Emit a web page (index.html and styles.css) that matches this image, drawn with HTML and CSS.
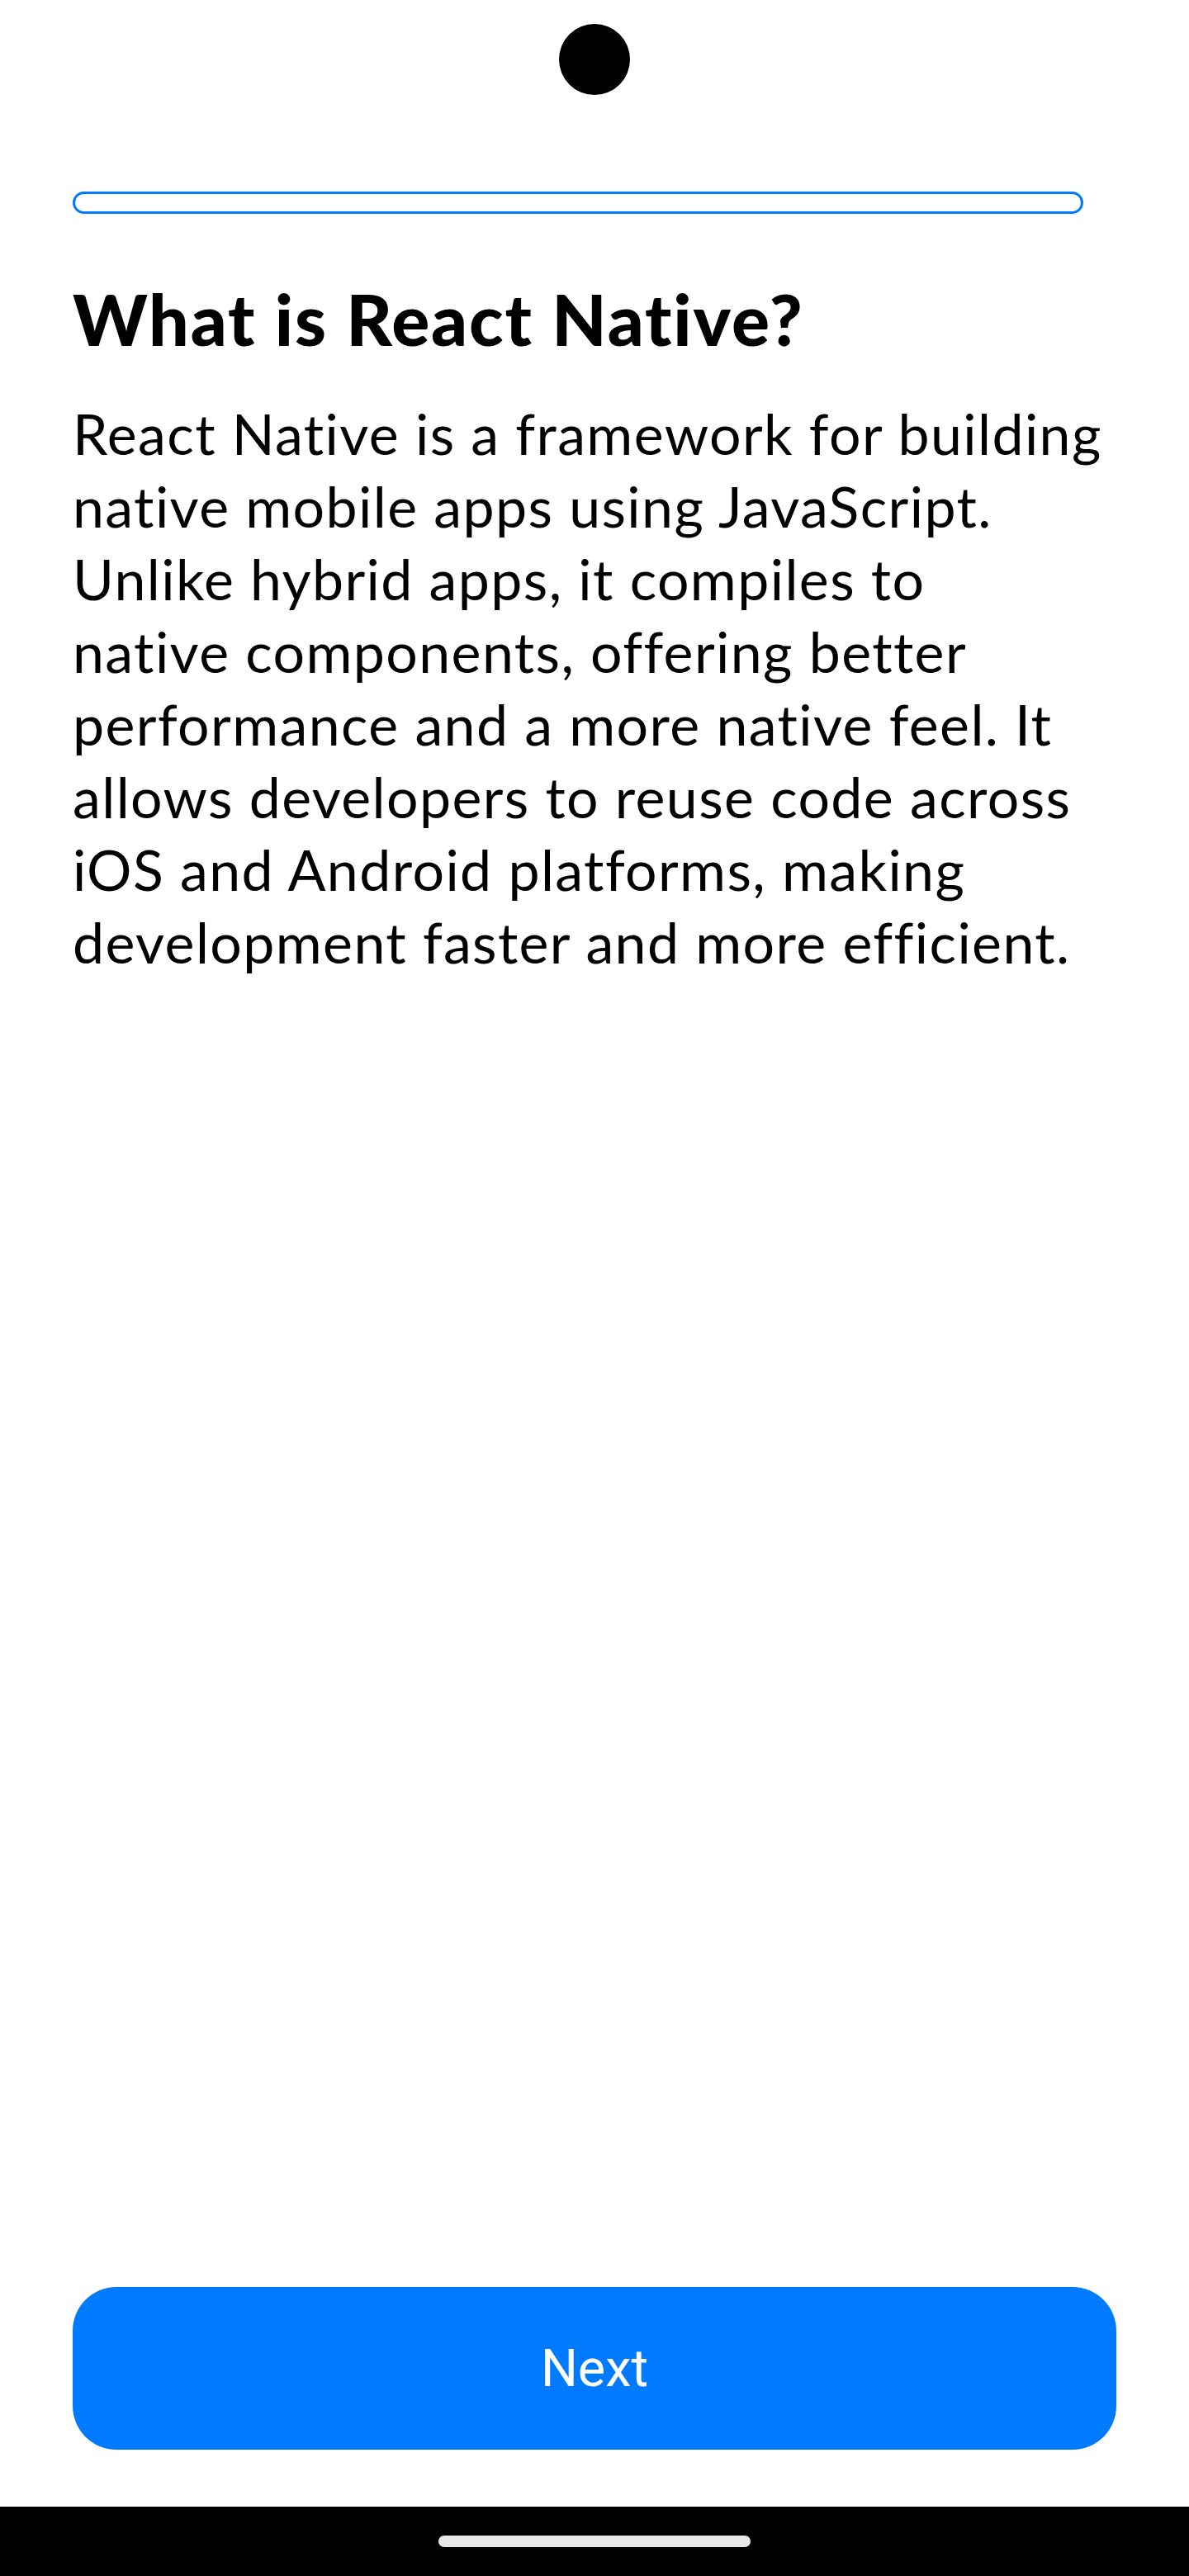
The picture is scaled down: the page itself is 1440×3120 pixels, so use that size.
FILE: index.html
```html
<!DOCTYPE html>
<html lang="en">
<head>
<meta charset="utf-8">
<title>What is React Native?</title>
<link rel="stylesheet" href="styles.css">
</head>
<body>
<div class="screen">
  <div class="status-bar">
    <div class="camera"></div>
  </div>
  <main class="content">
    <div class="progress"><div class="progress-fill"></div></div>
    <h1 class="title">What is React Native?</h1>
    <p class="body-text">React Native is a framework for building<br>native mobile apps using JavaScript.<br>Unlike hybrid apps, it compiles to<br>native components, offering better<br>performance and a more native feel. It<br>allows developers to reuse code across<br>iOS and Android platforms, making<br>development faster and more efficient.</p>
    <div class="spacer"></div>
    <button class="next-btn" type="button">Next</button>
  </main>
  <div class="nav-bar">
    <div class="home-handle"></div>
  </div>
</div>
</body>
</html>
```

FILE: styles.css
```css
* { box-sizing: border-box; }
html, body { margin: 0; padding: 0; background: #ffffff; }
.screen {
  width: 1440px;
  height: 3120px;
  display: flex;
  flex-direction: column;
  background: #ffffff;
}
.status-bar {
  height: 144px;
  display: flex;
  justify-content: center;
  padding-top: 29px;
  flex-shrink: 0;
}
.camera {
  width: 86px;
  height: 86px;
  border-radius: 50%;
  background: #000;
}
.content {
  flex: 1;
  display: flex;
  flex-direction: column;
  padding: 88px 88px 69px;
}
.progress {
  width: 1224px;
  height: 27px;
  border: 3px solid #007aff;
  border-radius: 14px;
  overflow: hidden;
}
.progress-fill { width: 0; height: 100%; background: #007aff; }
.title {
  margin: 72px 0 0;
  font-family: "Lato", "Inter", sans-serif;
  font-weight: 900;
  font-size: 86px;
  line-height: 110px;
  color: #000;
  letter-spacing: 1.9px;
}
.body-text {
  margin: 40px 0 0;
  font-family: "Lato", "Inter", sans-serif;
  font-weight: 400;
  font-size: 68px;
  line-height: 88px;
  color: #000;
  letter-spacing: 1.4px;
}
.spacer { flex: 1; }
.next-btn {
  height: 197px;
  width: 100%;
  border: none;
  border-radius: 53px;
  background: #007aff;
  color: #ffffff;
  font-family: "Roboto", "Liberation Sans", sans-serif;
  font-size: 63px;
  font-weight: 400;
  padding: 0;
}
.nav-bar {
  height: 84px;
  background: #000;
  display: flex;
  justify-content: center;
  padding-top: 35px;
  flex-shrink: 0;
}
.home-handle {
  width: 378px;
  height: 14px;
  border-radius: 7px;
  background: #e8e8e8;
}
```
